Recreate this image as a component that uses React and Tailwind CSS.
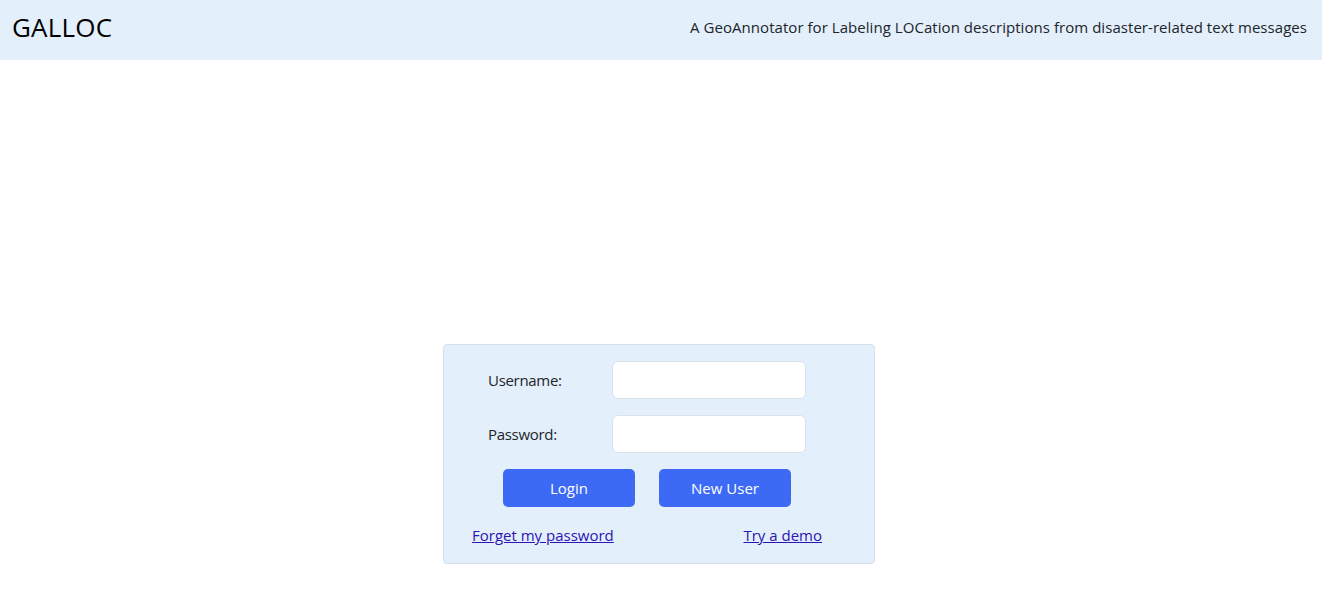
import React from "react";

export default function App() {
    return (
        <div className="min-h-[594px] bg-white font-['Open_Sans',sans-serif] text-[#212529]">
            {/* Header */}
            <header className="h-[60px] bg-[#e3effb] flex items-center justify-between pl-[12px] pr-[15px] pb-[6px]">
                <h1 className="text-[26px] text-black leading-none tracking-[0.2px]">GALLOC</h1>
                <p className="text-[15px] tracking-[0.05px]">A GeoAnnotator for Labeling LOCation descriptions from disaster-related text messages</p>
            </header>

            {/* Login card */}
            <div className="flex justify-center pt-[284px] pr-[4px]">
                <div className="w-[432px] h-[220px] bg-[#e3effb] border border-[#d3dfe9] rounded-[4px] pt-[16px]">
                    <div className="flex items-center h-[38px] pl-[44px]">
                        <label className="w-[124px] text-[15px] tracking-[-0.3px]">Username:</label>
                        <input type="text" className="w-[194px] h-[38px] bg-white border border-[#dbe2ea] rounded-[6px] outline-none" />
                    </div>
                    <div className="flex items-center h-[38px] pl-[44px] mt-[16px]">
                        <label className="w-[124px] text-[15px] tracking-[-0.3px]">Password:</label>
                        <input type="password" className="w-[194px] h-[38px] bg-white border border-[#dbe2ea] rounded-[6px] outline-none" />
                    </div>
                    <div className="flex gap-[24px] pl-[59px] mt-[16px]">
                        <button className="w-[132px] h-[38px] bg-[#3d6af5] text-white text-[15px] rounded-[5px]">Login</button>
                        <button className="w-[132px] h-[38px] bg-[#3d6af5] text-white text-[15px] rounded-[5px]">New User</button>
                    </div>
                    <div className="flex justify-between pl-[28px] pr-[52px] mt-[17px]">
                        <a href="#" className="text-[15px] text-[#2a14b4] underline">Forget my password</a>
                        <a href="#" className="text-[15px] text-[#2a14b4] underline">Try a demo</a>
                    </div>
                </div>
            </div>
        </div>
    );
}
